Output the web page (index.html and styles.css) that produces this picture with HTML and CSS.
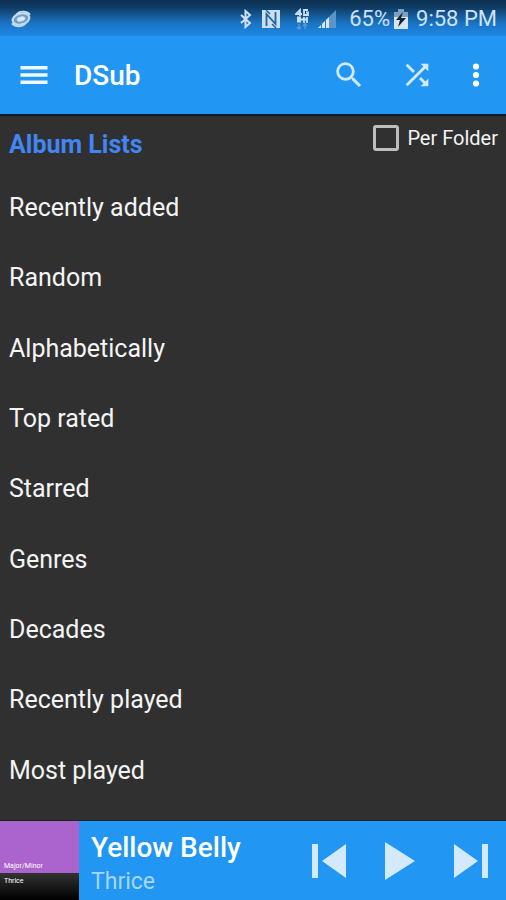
FILE: index.html
```
<!DOCTYPE html>
<html lang="en">
<head>
<meta charset="utf-8">
<meta name="viewport" content="width=device-width, initial-scale=1">
<title>DSub</title>
<link rel="stylesheet" href="styles.css">
</head>
<body>
<div class="status">
  <svg class="galaxy" width="22" height="18" viewBox="0 0 22 18"><g transform="rotate(-14 11 9)" fill="none" stroke="#c4dcf0"><ellipse cx="11" cy="9" rx="8.500" ry="5.500" fill="#6d9cc4" stroke-width="2.200"/><ellipse cx="11" cy="9" rx="4" ry="2" fill="#dcebf8"/><path d="M1 11c3 5 9 6 13 4M21 7C18 2 12 1 8 3" stroke-width="1.600"/></g></svg>
  <svg width="14" height="20" viewBox="0 0 14 20"><path d="M2 6l9 8-4.500 4V2L11 6l-9 8" fill="none" stroke="#cfe2f5" stroke-width="2"/></svg>
  <svg class="nfc" width="20" height="20" viewBox="0 0 20 20"><path d="M1 1h18v18H1z" fill="#c9dff3"/><path d="M5.500 17V5l9 10V3" fill="none" stroke="#246099" stroke-width="1.800"/><path d="M5 1l4 4M11 15l4 4" stroke="#246099" stroke-width="1.500"/></svg>
  <svg class="network" width="14" height="22" viewBox="0 0 14 22"><g fill="none" stroke="#c9dff3" stroke-width="1.800"><path d="M5 8V2L1 6h6M13 2H9v5h4V4.500h-2M2 9.500h3v4H2M9 9v6M12 9v6M2 11.500h10"/><path d="M4 16v5M2 19l2 2 2-2M10 21v-5M8 18l2-2 2 2" stroke="#5b9bd5" stroke-width="1.400"/></g></svg>
  <svg class="signal" width="20" height="20" viewBox="0 0 20 20"><path d="M19 1v18H1z" fill="#5b95c9"/><path d="M12 8v11H1z" fill="#d5e6f6"/><path d="M4.500 12v8M8.500 10v10" stroke="#287bc5"/></svg>
  <span class="percent">65%</span>
  <svg class="battery" width="14" height="20" viewBox="0 0 14 20"><path d="M4 0h6v3h4v17H0V3h4z" fill="#d5e5f3"/><path d="M0 3h4V0h6v3h4v5H0z" fill="#7ba1bf"/><path d="M9 3L2 11h4l-2 7 8-9H7z" fill="#16222c"/></svg>
  <span class="time">9:58 PM</span>
</div>
<header class="appbar">
  <button class="menu" aria-label="Menu"><svg width="36" height="36" viewBox="0 0 24 24"><path d="M3 18h18v-2.300H3zM3 13.150h18v-2.300H3zM3 8.300h18V6H3z"/></svg></button>
  <h1>DSub</h1>
  <button class="search" aria-label="Search"><svg width="34" height="34" viewBox="0 0 24 24"><path d="M15.500 14h-.79l-.28-.27A6.471 6.471 0 0 0 16 9.500 6.500 6.500 0 1 0 9.500 16c1.610 0 3.090-.590 4.230-1.570l.270.280v.790l5 4.990L20.490 19l-4.990-5zm-6 0C7.010 14 5 11.990 5 9.500S7.010 5 9.500 5 14 7.010 14 9.500 11.990 14 9.500 14z"/></svg></button>
  <button class="shuffle" aria-label="Shuffle"><svg width="34" height="34" viewBox="0 0 24 24"><path d="M10.590 9.170L5.410 4 4 5.410l5.170 5.170 1.420-1.410zM14.500 4l2.040 2.040L4 18.590 5.410 20 17.960 7.460 20 9.500V4h-5.500zm.33 9.410l-1.410 1.410 3.130 3.130L14.500 20H20v-5.500l-2.040 2.040-3.130-3.130z"/></svg></button>
  <button class="more" aria-label="More options"><svg width="34" height="34" viewBox="0 0 24 24"><circle cx="12" cy="6" r="2.200"/><circle cx="12" cy="12" r="2.200"/><circle cx="12" cy="18" r="2.200"/></svg></button>
</header>
<main>
  <div class="heading">
    <h2>Album Lists</h2>
    <label class="folder" for="per-folder"><input type="checkbox" id="per-folder">Per Folder</label>
  </div>
  <nav class="lists">
    <a href="#">Recently added</a>
    <a href="#">Random</a>
    <a href="#">Alphabetically</a>
    <a href="#">Top rated</a>
    <a href="#">Starred</a>
    <a href="#">Genres</a>
    <a href="#">Decades</a>
    <a href="#">Recently played</a>
    <a href="#">Most played</a>
  </nav>
</main>
<footer class="player">
  <div class="cover"><div class="cover-top">Major/Minor</div><div class="cover-bottom">Thrice</div></div>
  <div class="track"><div class="song">Yellow Belly</div><div class="artist">Thrice</div></div>
  <div class="controls">
    <button aria-label="Previous"><svg width="36" height="38" viewBox="0 0 36 38"><path d="M1 2h6v34H1zM35 2v34L11 19z"/></svg></button>
    <button aria-label="Play"><svg width="36" height="38" viewBox="0 0 36 38"><path d="M3 0v38l30-19z"/></svg></button>
    <button aria-label="Next"><svg width="36" height="38" viewBox="0 0 36 38"><path d="M1 2v34l24-17zM29 2h6v34h-6z"/></svg></button>
  </div>
</footer>
</body>
</html>
```
FILE: styles.css
```
* { box-sizing: border-box; }
body {
  margin: 0;
  min-height: 100vh;
  display: flex;
  flex-direction: column;
  background: #303030;
  color: #f4f4f4;
  font-family: Roboto, "Liberation Sans", sans-serif;
}
svg { display: block; flex: none; }
h1, h2 { margin: 0; }
button {
  padding: 0;
  border: 0;
  background: none;
  cursor: pointer;
}
.status {
  height: 36px;
  padding: 1px 9px 0 10px;
  display: flex;
  align-items: center;
  background: linear-gradient(#0c3050, #0f3b64 20%, #1a74c4 65%, #1e88e5);
  color: #cfe2f5;
  font-size: 22px;
  line-height: 34px;
}
.galaxy { margin-right: auto; }
.nfc { margin-left: 8px; }
.network { margin-left: 14px; }
.signal { margin-left: 8px; }
.percent { margin-left: 12px; }
.battery { margin: 0 8px 0 4px; }
.appbar {
  height: 80px;
  padding: 0 13px 0 16px;
  display: flex;
  align-items: center;
  background: #2196f3;
  border-bottom: 2px solid #10182c;
}
.appbar h1 {
  margin: 0 auto 0 22px;
  padding-top: 2px;
  color: #fff;
  font-size: 28px;
  line-height: 32px;
  font-weight: 500;
}
.menu { fill: #f2f8ff; }
.search, .shuffle { fill: #d3eafd; }
.more { fill: #fff; }
.shuffle { margin: 0 25px 0 34px; }
main {
  flex: 1;
  padding: 0 8px 15px 9px;
  display: flex;
  flex-direction: column;
}
.heading {
  height: 57px;
  display: flex;
  justify-content: space-between;
  align-items: flex-start;
}
.heading h2 {
  padding-top: 14px;
  color: #4285f4;
  font-size: 25px;
  line-height: 30px;
  font-weight: 700;
}
.folder {
  padding-top: 8px;
  display: flex;
  align-items: center;
  gap: 8px;
  font-size: 20px;
  line-height: 28px;
}
.folder input {
  appearance: none;
  width: 26px;
  height: 26px;
  margin: 0;
  border: 3px solid #bdbdbd;
  border-radius: 3px;
}
.folder input:checked { background: #4285f4; }
.lists {
  flex: 1;
  display: grid;
  grid-auto-rows: 1fr;
}
.lists a {
  display: flex;
  align-items: center;
  color: inherit;
  font-size: 25px;
  line-height: 30px;
  text-decoration: none;
}
.player {
  height: 79px;
  display: flex;
  background: #2196f3;
  box-shadow: 0 -1px #1c2620;
}
.cover {
  width: 79px;
  display: flex;
  flex-direction: column;
  color: #fff;
  font-size: 7px;
  line-height: 8px;
}
.cover-top {
  height: 52px;
  padding: 0 4px 3px;
  display: flex;
  align-items: flex-end;
  background: #ab63cd;
}
.cover-bottom {
  flex: 1;
  padding: 4px;
  background: linear-gradient(#333, #000);
}
.track {
  flex: 1;
  padding: 10px 0 0 12px;
}
.song {
  color: #fff;
  font-size: 28px;
  line-height: 34px;
  font-weight: 500;
}
.artist {
  color: #a9d6fa;
  font-size: 23px;
  line-height: 34px;
}
.controls {
  padding-right: 17px;
  display: flex;
  align-items: center;
  gap: 35px;
  fill: #d3e9fc;
}
```
